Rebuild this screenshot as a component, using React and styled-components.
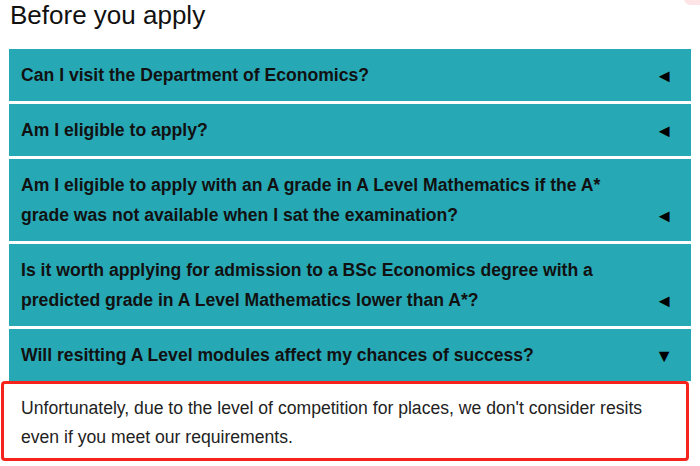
import React, { useState } from 'react';
import styled, { createGlobalStyle } from 'styled-components';

const GlobalStyle = createGlobalStyle`
  body {
    margin: 0;
    background: #fff;
    font-family: "Liberation Sans", Arial, sans-serif;
  }
`;

const Page = styled.div`
  width: 700px;
  height: 466px;
  overflow: hidden;
  position: relative;
  box-sizing: border-box;
  padding-left: 9px;
`;

const Corner = styled.div`
  position: absolute;
  top: -8px;
  right: -6px;
  width: 22px;
  height: 13px;
  border-radius: 8px;
  background: #fde4e6;
`;

const Heading = styled.h2`
  margin: 0 0 19px 1px;
  font-size: 26px;
  line-height: 30px;
  font-weight: normal;
  color: #111;
`;

const List = styled.div`
  width: 682px;
  display: flex;
  flex-direction: column;
`;

const Question = styled.div`
  display: flex;
  align-items: flex-end;
  justify-content: space-between;
  background: #27a8b5;
  padding: 11px 18px 11px 12px;
  margin-bottom: 3px;
  font-size: 17.6px;
  font-weight: bold;
  line-height: 30px;
  color: #111;
  cursor: pointer;
`;

const Label = styled.span`
  max-width: 610px;
`;

const Arrow = styled.span`
  font-size: 18px;
  line-height: 28px;
  color: #000;
  flex-shrink: 0;
`;

const Answer = styled.div`
  margin: -3px 2px 0 -8px;
  border: 3px solid #f5231c;
  border-radius: 4px;
  padding: 10px 12px 6px 17px;
  font-size: 17.6px;
  line-height: 29px;
  color: #222;
`;

const faqs = [
  { q: 'Can I visit the Department of Economics?' },
  { q: 'Am I eligible to apply?' },
  {
    q: 'Am I eligible to apply with an A grade in A Level Mathematics if the A* grade was not available when I sat the examination?',
  },
  {
    q: 'Is it worth applying for admission to a BSc Economics degree with a predicted grade in A Level Mathematics lower than A*?',
  },
  {
    q: 'Will resitting A Level modules affect my chances of success?',
    a: "Unfortunately, due to the level of competition for places, we don't consider resits even if you meet our requirements.",
  },
];

const App = () => {
  const [open, setOpen] = useState(4);

  return (
    <Page>
      <GlobalStyle />
      <Corner />
      <Heading>Before you apply</Heading>
      <List>
        {faqs.map((item, i) => (
          <React.Fragment key={i}>
            <Question onClick={() => setOpen(open === i ? null : i)}>
              <Label>{item.q}</Label>
              <Arrow>{open === i ? '▼' : '◄'}</Arrow>
            </Question>
            {open === i && item.a && <Answer>{item.a}</Answer>}
          </React.Fragment>
        ))}
      </List>
    </Page>
  );
};

export default App;
